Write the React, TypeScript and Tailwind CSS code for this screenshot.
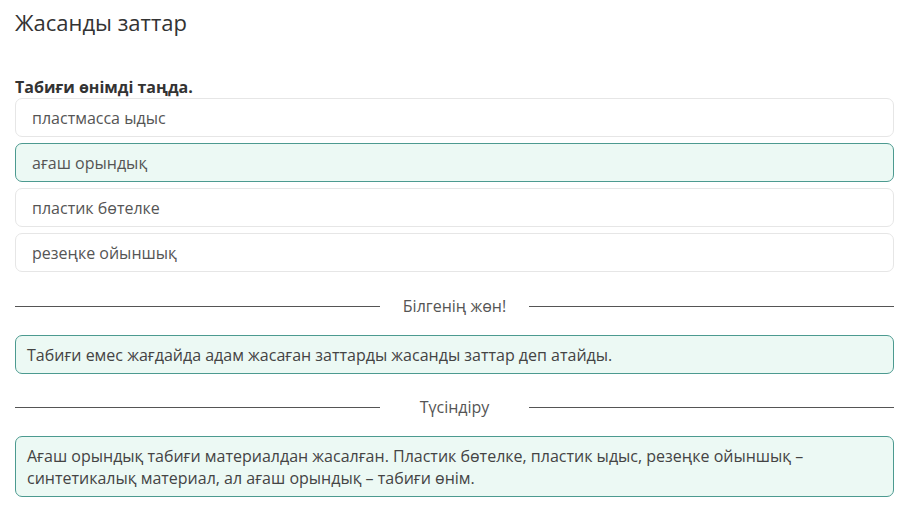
import React from "react";

const options = [
  { label: "пластмасса ыдыс", correct: false },
  { label: "ағаш орындық", correct: true },
  { label: "пластик бөтелке", correct: false },
  { label: "резеңке ойыншық", correct: false },
];

const Divider = ({ title }: { title: string }) => (
  <div className="flex items-center">
    <div className="h-px flex-1 bg-[#555]" />
    <span className="w-[149px] text-center text-[16px] leading-[22px] text-[#555]">{title}</span>
    <div className="h-px flex-1 bg-[#555]" />
  </div>
);

export default function App() {
  return (
    <div className="min-h-[517px] bg-white pl-[15px] pr-[14px] font-['Open_Sans',sans-serif] text-[#333]">
      <h1 className="pt-[6px] text-[22px] leading-[32px] font-normal text-[#333]">Жасанды заттар</h1>

      <p className="mt-[39px] text-[16px] leading-[20px] font-bold text-[#333]">Табиғи өнімді таңда.</p>

      <div className="mt-[1px] flex flex-col gap-[6px]">
        {options.map((o) => (
          <div
            key={o.label}
            className={`flex h-[39px] items-center rounded-[7px] border px-[16px] text-[16px] text-[#555] ${
              o.correct ? "border-[#4c9a90] bg-[#ecf9f4]" : "border-[#e6e6e6] bg-white"
            }`}
          >
            {o.label}
          </div>
        ))}
      </div>

      <div className="mt-[23px]">
        <Divider title="Білгенің жөн!" />
      </div>

      <div className="mt-[18px] flex h-[39px] items-center rounded-[7px] border border-[#4c9a90] bg-[#ecf9f4] px-[11px] text-[16px] text-[#444]">
        Табиғи емес жағдайда адам жасаған заттарды жасанды заттар деп атайды.
      </div>

      <div className="mt-[22px]">
        <Divider title="Түсіндіру" />
      </div>

      <div className="mt-[18px] rounded-[7px] border border-[#4c9a90] bg-[#ecf9f4] px-[11px] pt-[8px] pb-[7px] text-[16px] leading-[22px] text-[#444]">
        Ағаш орындық табиғи материалдан жасалған. Пластик бөтелке, пластик ыдыс, резеңке ойыншық – синтетикалық материал, ал ағаш орындық – табиғи өнім.
      </div>
    </div>
  );
}
